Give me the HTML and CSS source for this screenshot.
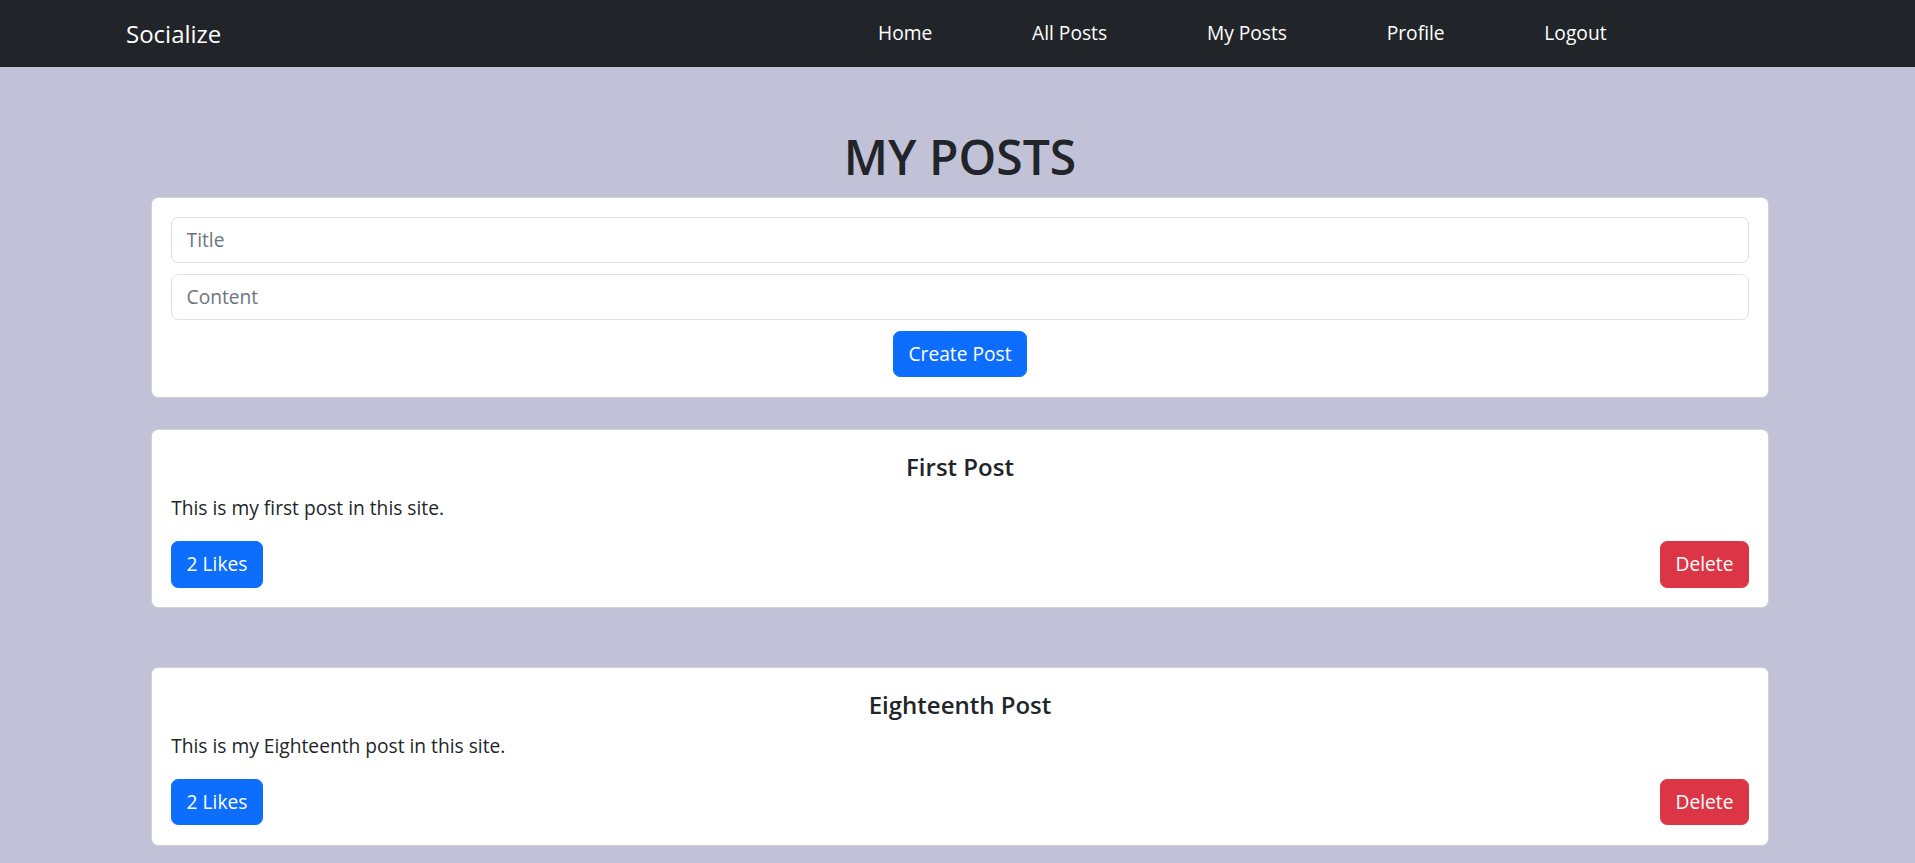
FILE: index.html
```html
<!DOCTYPE html>
<html lang="en">
<head>
<meta charset="utf-8">
<title>Socialize - My Posts</title>
<link rel="stylesheet" href="styles.css">
</head>
<body>
<nav class="navbar">
  <a class="brand" href="#">Socialize</a>
  <ul class="nav-links">
    <li><a href="#">Home</a></li>
    <li><a href="#">All Posts</a></li>
    <li><a href="#">My Posts</a></li>
    <li><a href="#">Profile</a></li>
    <li><a href="#">Logout</a></li>
  </ul>
</nav>
<main class="container">
  <h1 class="page-title">MY POSTS</h1>
  <form class="card create-card">
    <input class="form-control" type="text" placeholder="Title">
    <input class="form-control" type="text" placeholder="Content">
    <div class="center">
      <button type="button" class="btn btn-primary">Create Post</button>
    </div>
  </form>

  <div class="card post-card">
    <h5 class="post-title">First Post</h5>
    <p class="post-text">This is my first post in this site.</p>
    <div class="post-actions">
      <button type="button" class="btn btn-primary">2 Likes</button>
      <button type="button" class="btn btn-danger">Delete</button>
    </div>
  </div>

  <div class="card post-card">
    <h5 class="post-title">Eighteenth Post</h5>
    <p class="post-text">This is my Eighteenth post in this site.</p>
    <div class="post-actions">
      <button type="button" class="btn btn-primary">2 Likes</button>
      <button type="button" class="btn btn-danger">Delete</button>
    </div>
  </div>
</main>
</body>
</html>
```
FILE: styles.css
```css
* {
  box-sizing: border-box;
}

html, body {
  margin: 0;
  padding: 0;
}

body {
  background: #c1c2d7;
  color: #212529;
  font-family: "Open Sans", "Noto Sans", "Liberation Sans", sans-serif;
  font-size: 19.2px;
  line-height: 1.5;
}

.navbar {
  height: 67px;
  background: #212529;
  display: flex;
  align-items: center;
  padding: 0 258px 0 126px;
}

.brand {
  color: #fff;
  text-decoration: none;
  font-size: 24px;
  line-height: 36px;
}

.nav-links {
  list-style: none;
  margin: 0 0 0 auto;
  padding: 0;
  display: flex;
}

.nav-links a {
  display: block;
  color: #fff;
  text-decoration: none;
  padding: 8px 49.9px;
  line-height: 28.8px;
}

.nav-links li:last-child a {
  padding-right: 50.5px;
}

.container {
  padding: 0 146px 40px 151px;
}

.page-title {
  margin: 61px 0 11px;
  font-size: 48px;
  font-weight: 600;
  line-height: 1.2;
  text-align: center;
}

.card {
  background: #fff;
  border: 1px solid rgba(0, 0, 0, 0.175);
  border-radius: 7.2px;
  padding: 19.4px 19.2px;
}

.create-card {
  margin: 0;
  padding-bottom: 20px;
}

.form-control {
  display: block;
  width: 100%;
  height: 46px;
  margin: 0 0 11px;
  padding: 7.2px 14.4px;
  font-family: inherit;
  font-size: 19.2px;
  color: #212529;
  background: #fff;
  border: 1px solid #dee2e6;
  border-radius: 7.2px;
}

.form-control::placeholder {
  color: #6c757d;
}

.center {
  display: flex;
  justify-content: center;
}

.btn {
  font-family: inherit;
  font-size: 19.2px;
  line-height: 28.8px;
  height: 46.5px;
  padding: 7.2px 14.4px;
  border: 1px solid transparent;
  border-radius: 7.2px;
  color: #fff;
  cursor: pointer;
}

.btn-primary {
  background: #0d6efd;
  border-color: #0d6efd;
}

.btn-danger {
  background: #dc3545;
  border-color: #dc3545;
}

.post-card {
  margin-top: 31px;
  padding-top: 21px;
}

.post-card + .post-card {
  margin-top: 59px;
}

.post-title {
  margin: 0 0 11.5px;
  font-size: 24px;
  font-weight: 600;
  line-height: 31px;
  text-align: center;
}

.post-text {
  margin: 0 0 18.5px;
  line-height: 28.8px;
}

.post-actions {
  display: flex;
  justify-content: space-between;
}
```
